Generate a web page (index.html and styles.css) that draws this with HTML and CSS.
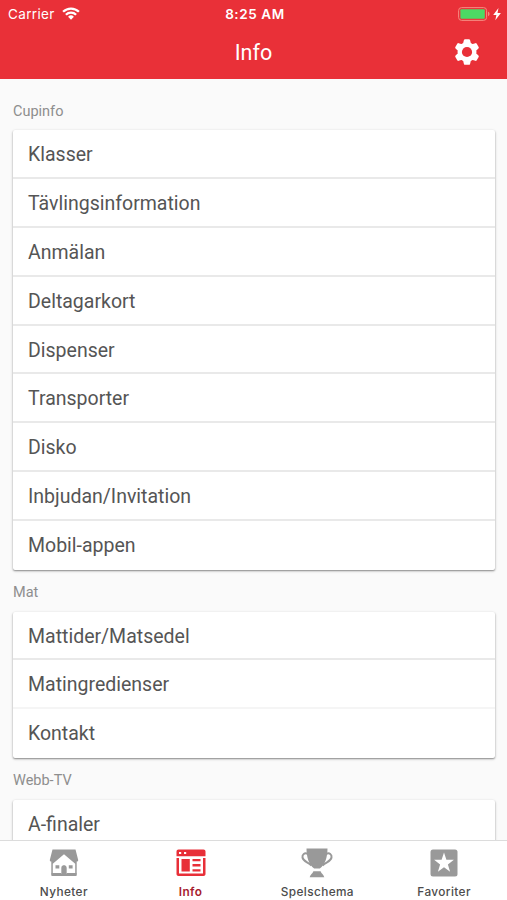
FILE: index.html
```html
<!DOCTYPE html>
<html lang="sv">
<head>
<meta charset="utf-8">
<title>Info</title>
<link rel="stylesheet" href="styles.css">
</head>
<body>
<div class="app">
  <header class="header">
    <div class="status">
      <div class="carrier"><span>Carrier</span>
        <svg class="wifi" viewBox="0 0 18 13" width="18" height="13" fill="none" stroke="#fff" stroke-width="2.3"><path d="M1.1 4.800a11.200 11.200 0 0 1 15.800 0M3.900 7.700a7.200 7.200 0 0 1 10.200 0"/><path d="M6.100 9.800a4.100 4.100 0 0 1 5.800 0L9 12.700z" fill="#fff" stroke="none"/></svg>
      </div>
      <div class="time">8:25 AM</div>
      <div class="power">
        <svg viewBox="0 0 44 14" width="44" height="14"><rect x=".6" y=".6" width="28" height="12.8" rx="3" fill="none" stroke="#f58b80" stroke-width="1"/><rect x="2.400" y="2.300" width="24.400" height="9.400" rx="1" fill="#4cd964"/><path d="M30 4.800c2 .6 2 3.800 0 4.400z" fill="#f58b80"/><path d="M40.500 1 35.200 7.900h3.200L37.300 13.200l5.600-7.200h-3.400z" fill="#fff"/></svg>
      </div>
    </div>
    <div class="titlebar">
      <h1 class="title">Info</h1>
      <svg class="gear" viewBox="0 0 26 26" width="26" height="26"><path fill="#fff" stroke="#fff" stroke-width="2.400" stroke-linejoin="round" d="M11.100 1.400h3.800l.9 3.400 2.500 1.500 3.400-1 1.900 3.300L21.200 11v4l2.400 2.400-1.900 3.300-3.400-1-2.500 1.500-.9 3.400h-3.800l-.9-3.400-2.500-1.500-3.400 1-1.900-3.300L4.800 15v-4L2.400 8.600l1.900-3.300 3.400 1 2.500-1.500z"/><circle cx="13" cy="13" r="5.100" fill="#e93038"/></svg>
    </div>
  </header>
  <main class="content">
    <h2 class="section">Cupinfo</h2>
    <ul class="card">
      <li class="row">Klasser</li>
      <li class="row">Tävlingsinformation</li>
      <li class="row">Anmälan</li>
      <li class="row">Deltagarkort</li>
      <li class="row">Dispenser</li>
      <li class="row">Transporter</li>
      <li class="row">Disko</li>
      <li class="row">Inbjudan/Invitation</li>
      <li class="row">Mobil-appen</li>
    </ul>
    <h2 class="section">Mat</h2>
    <ul class="card">
      <li class="row">Mattider/Matsedel</li>
      <li class="row faint">Matingredienser</li>
      <li class="row">Kontakt</li>
    </ul>
    <h2 class="section">Webb-TV</h2>
    <ul class="card">
      <li class="row">A-finaler</li>
    </ul>
  </main>
  <nav class="tabs">
    <div class="tab">
      <svg viewBox="0 0 30 30" width="30" height="30"><path fill="#999" d="M3.500 1.500h23L29.200 12c0 1-.6 1.600-1.500 1.600V26c0 1.300-.8 2-2 2H4.300c-1.200 0-2-.7-2-2V13.600C1.400 13.600.8 13 .8 12z"/><path fill="#fff" d="m15 6.300 11.200 9.400V26h-8.600v-6.300c0-3.200-5.200-3.200-5.200 0V26H3.800V15.700z"/><path fill="#999" d="M6.500 17.300h3.800v3.300H6.500zM19.800 17.300h3.800v3.300h-3.800zM2.500 25h9.900v3H2.500zM17.600 25h9.900v3h-9.900z"/><path fill="#999" d="M12.800 28v-8c0-3.400 4.400-3.400 4.400 0v8z"/></svg>
      <span>Nyheter</span>
    </div>
    <div class="tab active">
      <svg viewBox="0 0 30 30" width="30" height="30" fill="#e82f38"><path fill-rule="evenodd" d="M2.500 1.500h25c1.200 0 2 .8 2 2v4.800H.5V3.500c0-1.200.8-2 2-2zM3 3.900v2h2.200v-2zm5 0v2h2.200v-2z"/><path fill-rule="evenodd" d="M.5 10h2.500v15.400h24V10h2.500v16c0 1.200-.8 2-2 2h-25c-1.200 0-2-.8-2-2z"/><path d="M5.500 11h8.300v12.500H5.500zM16.500 11h8v2.300h-8zM16.500 16.100h8v2.300h-8zM16.500 21.200h8v2.300h-8z"/></svg>
      <span>Info</span>
    </div>
    <div class="tab">
      <svg viewBox="0 0 32 30" width="32" height="30"><path fill="#999" d="M5.500.5h21c0 8.500-2.500 16.500-7.700 20h-5.600C8 17 5.500 9 5.500.5zM12.300 23.300h7.400c.2 2 2.800 2.800 3.600 6H8.700c.8-3.200 3.400-4 3.600-6z"/><path fill="none" stroke="#999" stroke-width="2" d="M7 6C3.500 4.200 1 6.500 1.500 9.500c.7 4 5 4.300 9 8M25 6c3.500-1.800 6 .5 5.500 3.500-.7 4-5 4.300-9 8"/></svg>
      <span>Spelschema</span>
    </div>
    <div class="tab">
      <svg viewBox="0 0 30 30" width="30" height="30"><rect x="1.500" y="1.500" width="27" height="27" rx="2.500" fill="#999"/><path fill="#fff" d="m15 4.500 2.400 7.200 7.500.1-6 4.600 2.200 7.300L15 19.300l-6.100 4.400 2.200-7.300-6-4.600 7.500-.1z"/></svg>
      <span>Favoriter</span>
    </div>
  </nav>
</div>
</body>
</html>
```
FILE: styles.css
```css
* { box-sizing: border-box; margin: 0; padding: 0; }
body { font-family: Roboto, "Liberation Sans", sans-serif; background: #fafafa; }
.app { display: flex; flex-direction: column; height: 900px; overflow: hidden; }
.header { flex: none; height: 79px; background: #e93038; color: #fff; }
.status {
  display: grid; grid-template-columns: 1fr auto 1fr; align-items: center;
  height: 27px; padding: 0 5px 0 8px;
  font-family: Inter, "Liberation Sans", sans-serif; font-size: 13.5px;
}
.carrier { display: flex; align-items: center; gap: 7px; letter-spacing: .35px; }
.time { font-weight: 600; letter-spacing: .6px; }
.power { display: flex; justify-content: flex-end; }
.titlebar { display: grid; grid-template-columns: 1fr auto 1fr; align-items: center; height: 50px; padding: 0 27px; }
.title { grid-column: 2; font-size: 21.5px; font-weight: 400; }
.gear { justify-self: end; }
.content { flex: 1; min-height: 0; overflow: hidden; padding: 22px 12px 0 13px; }
.section { height: 41.5px; padding-top: 13px; line-height: 20px; font-size: 14.5px; font-weight: 400; color: #8e8e8e; }
.section:first-child { height: 29px; padding-top: 1px; }
.card { list-style: none; background: #fff; border-radius: 2px; box-shadow: 0 1px 3px rgba(0,0,0,.22), 0 1px 1.5px rgba(0,0,0,.3); }
.row { height: 48.9px; padding-left: 15px; line-height: 49px; font-size: 19.5px; color: #555; border-bottom: 2px solid #e9e9e9; }
.row:last-child { border-bottom-color: transparent; }
.faint { border-bottom-color: #f5f5f5; }
.tabs { flex: none; display: grid; grid-template-columns: repeat(4, 1fr); height: 60px; background: #fff; border-top: 1px solid #dcdcdc; }
.tab { display: flex; flex-direction: column; align-items: center; padding: 7px 0 0 1px; gap: 5px; font-family: Inter, "Liberation Sans", sans-serif; font-size: 11.8px; line-height: 18px; font-weight: 500; letter-spacing: .4px; color: #4c4c4c; }
.active { color: #a61c2e; font-weight: 600; }
```
